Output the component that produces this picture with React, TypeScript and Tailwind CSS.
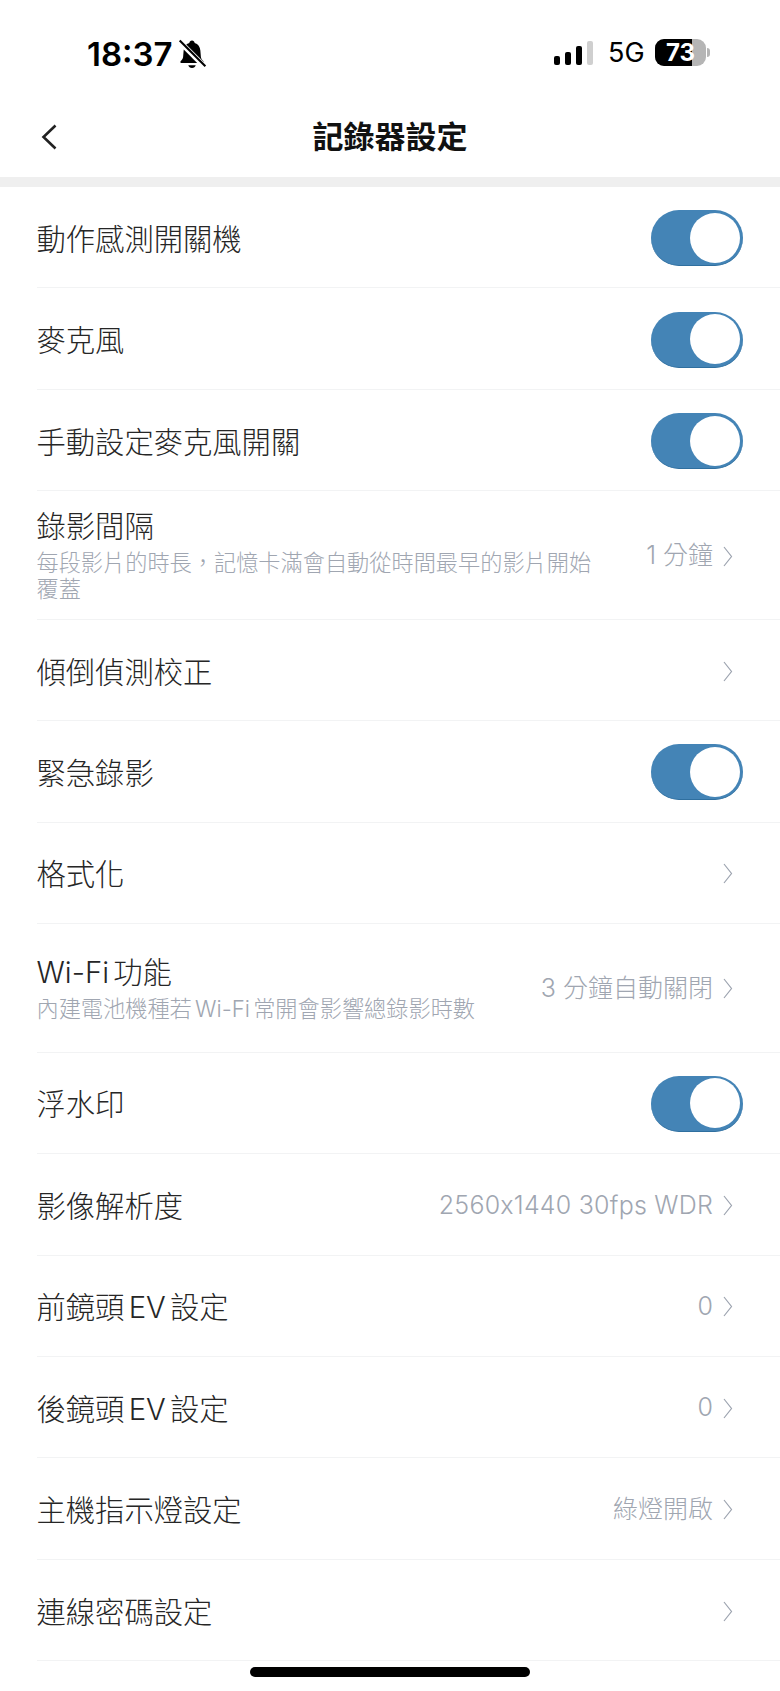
import type { ReactNode } from "react";

const FONT = "font-['Inter','Noto_Sans_CJK_TC','Noto_Sans_CJK_SC',sans-serif]";

type Row = {
  label: string;
  hint?: string;
  value?: string;
  latin?: boolean;
  toggle?: boolean;
};

const ROWS: Row[] = [
  { label: "動作感測開關機", toggle: true },
  { label: "麥克風", toggle: true },
  { label: "手動設定麥克風開關", toggle: true },
  {
    label: "錄影間隔",
    hint: "每段影片的時長，記憶卡滿會自動從時間最早的影片開始覆蓋",
    value: "1 分鐘",
  },
  { label: "傾倒偵測校正" },
  { label: "緊急錄影", toggle: true },
  { label: "格式化" },
  {
    label: "Wi-Fi 功能",
    hint: "內建電池機種若 Wi-Fi 常開會影響總錄影時數",
    value: "3 分鐘自動關閉",
  },
  { label: "浮水印", toggle: true },
  { label: "影像解析度", value: "2560x1440 30fps WDR", latin: true },
  { label: "前鏡頭 EV 設定", value: "0" },
  { label: "後鏡頭 EV 設定", value: "0" },
  { label: "主機指示燈設定", value: "綠燈開啟" },
  { label: "連線密碼設定" },
];

function Toggle() {
  return (
    <div className="mt-[2px] flex h-14 w-[92px] items-center justify-end rounded-full border-b border-b-[#2f6f9f] bg-[#4484b6] pr-[3px]">
      <div className="size-[50px] rounded-full bg-white" />
    </div>
  );
}

function Chevron() {
  return (
    <svg width="10" height="21" viewBox="0 0 10 21" fill="none" className="shrink-0">
      <path d="M1 1l7.5 9.5L1 20" stroke="#9ca3af" strokeWidth="1.2" />
    </svg>
  );
}

function SettingRow({ row }: { row: Row }): ReactNode {
  const tall = Boolean(row.hint);
  return (
    <div
      className={`flex items-center justify-between border-b border-[#f2f3f4] pr-[37px] ${
        tall ? "h-[128.5px]" : "h-[101.45px]"
      }`}
    >
      <div className={`min-w-0 ${tall ? "" : "pt-[5px]"}`}>
        <div className="text-[29.3px] leading-[38px] font-light text-[#262626] [word-spacing:-4px]">{row.label}</div>
        {row.hint && (
          <div className="mt-1 w-[565px] text-[22.2px] leading-[26px] font-light text-[#a0a6b1] [word-spacing:-3px]">
            {row.hint}
          </div>
        )}
      </div>
      {row.toggle ? (
        <Toggle />
      ) : (
        <div className="flex shrink-0 items-center gap-[10px] pt-[2px] pr-[10px]">
          {row.value && (
            <span
              className={`text-[25px] font-light whitespace-nowrap text-[#a0a6b1] [font-feature-settings:'calt'_0] ${
                row.latin ? "tracking-[0.23px]" : ""
              }`}
            >
              {row.value}
            </span>
          )}
          <Chevron />
        </div>
      )}
    </div>
  );
}

function StatusBar() {
  return (
    <div className="flex h-[97px] items-start justify-between pt-[36px] pr-[70px] pl-[87px] font-['Inter',sans-serif] text-black">
      <div className="flex items-center gap-[4px]">
        <span className="text-[33px] leading-[36px] font-semibold">18:37</span>
        <svg width="30" height="30" viewBox="0 0 28 28" fill="black">
          <path d="M14 1.500c1.400 0 2.300 1 2.500 2.200 3.300.9 5 3.600 5.300 7l.5 6c.2 1.600 1.200 2.800 2.200 3.800.7.8.3 2-.9 2H4.400c-1.200 0-1.600-1.200-.9-2 1-1 2-2.200 2.200-3.800l.5-6c.3-3.400 2-6.100 5.300-7 .2-1.200 1.100-2.200 2.500-2.200z" />
          <path d="M10.500 24.500h7c-.4 1.500-1.800 2.500-3.500 2.500s-3.100-1-3.500-2.500z" />
          <path d="M2 2l24 24" stroke="white" strokeWidth="5" />
          <path d="M2.500 1.500l24 24" stroke="black" strokeWidth="2" />
        </svg>
      </div>
      <div className="flex items-center pt-[3px]">
        <div className="flex h-6 items-end gap-[5px]">
          <div className="h-[9px] w-[6px] rounded-[2px] bg-black" />
          <div className="h-[13px] w-[6px] rounded-[2px] bg-black" />
          <div className="h-[19px] w-[6px] rounded-[2px] bg-black" />
          <div className="h-6 w-[6px] rounded-[2px] bg-[#cfcfcf]" />
        </div>
        <span className="ml-[15px] w-[47px] text-[27px] leading-[27px] font-normal">5G</span>
        <div className="relative flex h-[27px] w-[51px] overflow-hidden rounded-[9px] bg-[#b5b5b5]">
          <div className="h-full w-[37px] bg-black" />
          <span className="absolute top-0 left-[11px] text-[24px] leading-[27px] font-bold text-white">73</span>
        </div>
        <div className="ml-[1px] h-[9px] w-[3px] rounded-r-full bg-[#b5b5b5]" />
      </div>
    </div>
  );
}

export default function App() {
  return (
    <div className={`relative h-[1691px] w-[780px] overflow-hidden bg-white ${FONT}`}>
      <StatusBar />

      <div className="relative flex h-[80px] items-center justify-center">
        <button className="absolute top-[27px] left-[41px]">
          <svg width="16" height="26" viewBox="0 0 16 26" fill="none" className="block">
            <path d="M14.500 1.500L2.500 13l12 11.500" stroke="#222" strokeWidth="2.600" />
          </svg>
        </button>
        <h1 className="text-[31px] leading-10 font-bold text-[#111]">記錄器設定</h1>
      </div>

      <div className="h-[10px] bg-[#efefef]" />

      <div className="pl-[36.5px]">
        {ROWS.map((row) => (
          <SettingRow key={row.label} row={row} />
        ))}
      </div>

      <div className="absolute top-[1667px] left-[250px] h-[10px] w-[280px] rounded-full bg-black" />
    </div>
  );
}
